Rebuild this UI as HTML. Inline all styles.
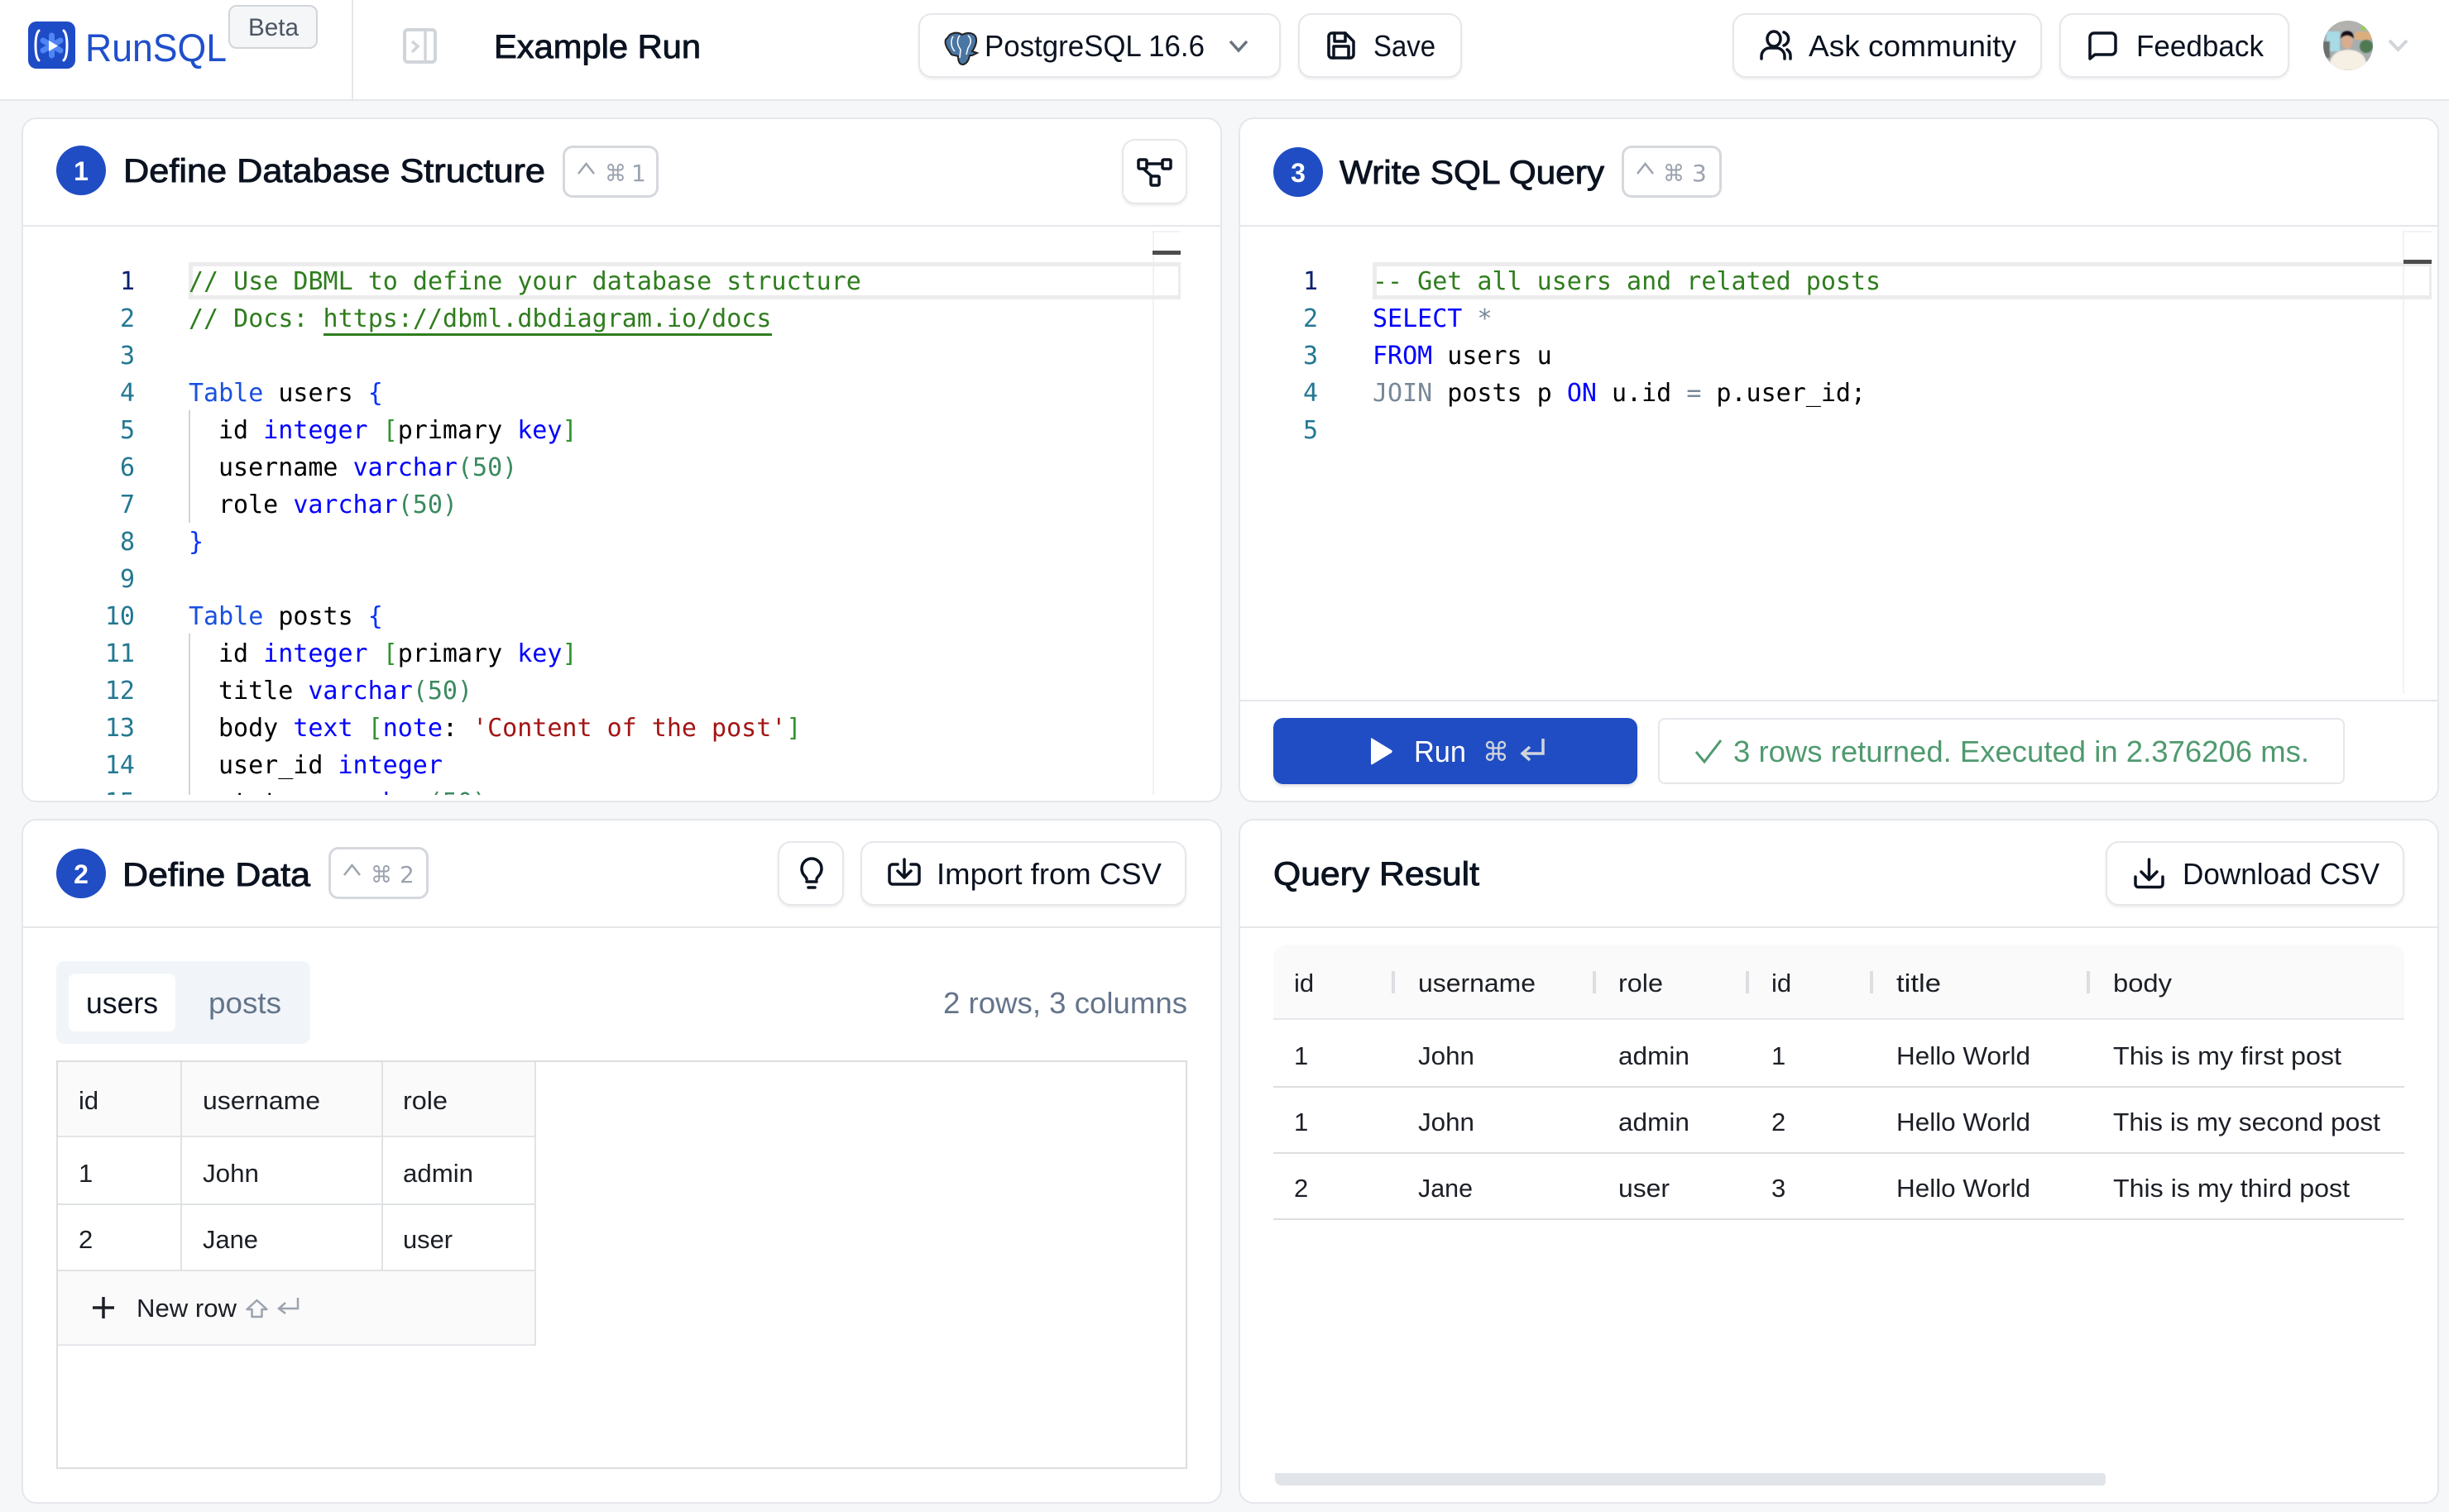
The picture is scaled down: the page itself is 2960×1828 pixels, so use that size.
<!DOCTYPE html>
<html lang="en">
<head>
<meta charset="utf-8">
<title>RunSQL - Example Run</title>
<style>
*{box-sizing:border-box}
html,body{margin:0;padding:0;width:2960px;height:1828px;overflow:hidden;background:#f6f7f9}
.a{position:absolute}
.header{left:0;top:0;width:2960px;height:122px;background:#fff;border-bottom:2px solid #e5e7eb}
.card{background:#fff;border:2px solid #e5e7eb;border-radius:18px;width:1451px;height:828px}
.btn{background:#fff;border:2px solid #e5e7eb;border-radius:16px;box-shadow:0 2px 3px rgba(0,0,0,.07)}
.kbd{background:#fff;border:3px solid #d5d8dd;border-radius:12px}
.line{background:#e5e7eb;height:2px}
svg{position:absolute;left:0;top:0}
text{font-family:"Liberation Sans",sans-serif;white-space:pre}
.h{font-weight:400;font-size:40px;fill:#0b1220;stroke:#0b1220;stroke-width:.9px}
.b{font-size:36px;fill:#0b1220}
.n{font-weight:700;font-size:32px;fill:#fff;text-anchor:middle}
.k{font-family:"DejaVu Sans",sans-serif;font-size:28px;fill:#9ca3af}
.t{font-size:31px;fill:#1c1f26}
.ic{fill:none;stroke:#0b1220;stroke-width:3.5;stroke-linecap:round;stroke-linejoin:round}
.code text,text.m{font-family:"DejaVu Sans Mono",monospace;font-size:30px}
.ln{fill:#237893;text-anchor:end}
.cm{fill:#2f7d1e}.kw{fill:#0000ff}.tb{fill:#1a50e0}.br{fill:#319331}.nm{fill:#3a8a5e}.st{fill:#a31515}.bk{fill:#000}.op{fill:#778899}
</style>
</head>
<body>
<div class="a header"></div>
<div class="a" style="left:425px;top:0;width:2px;height:120px;background:#e5e7eb"></div>
<div class="a" style="left:276px;top:6px;width:108px;height:53px;background:#f5f6f8;border:2px solid #d1d5db;border-radius:10px"></div>
<div class="a btn" style="left:1110px;top:16px;width:438px;height:78px"></div>
<div class="a btn" style="left:1569px;top:16px;width:198px;height:78px"></div>
<div class="a btn" style="left:2094px;top:16px;width:374px;height:78px"></div>
<div class="a btn" style="left:2489px;top:16px;width:278px;height:78px"></div>

<div class="a card" style="left:26px;top:142px"></div>
<div class="a card" style="left:26px;top:990px"></div>
<div class="a card" style="left:1497px;top:142px"></div>
<div class="a card" style="left:1497px;top:990px"></div>
<div class="a line" style="left:28px;top:272px;width:1447px"></div>
<div class="a line" style="left:1499px;top:272px;width:1447px"></div>
<div class="a line" style="left:28px;top:1120px;width:1447px"></div>
<div class="a line" style="left:1499px;top:1120px;width:1447px"></div>
<div class="a line" style="left:1499px;top:846px;width:1447px"></div>

<div class="a kbd" style="left:680px;top:176px;width:116px;height:63px"></div>
<div class="a kbd" style="left:1960px;top:176px;width:121px;height:63px"></div>
<div class="a kbd" style="left:397px;top:1024px;width:121px;height:63px"></div>
<div class="a btn" style="left:1356px;top:168px;width:79px;height:79px"></div>
<div class="a btn" style="left:940px;top:1017px;width:80px;height:78px"></div>
<div class="a btn" style="left:1040px;top:1017px;width:394px;height:78px"></div>
<div class="a btn" style="left:2545px;top:1017px;width:361px;height:78px"></div>

<div class="a" style="left:1539px;top:868px;width:440px;height:80px;background:#204dc4;border-radius:12px;box-shadow:0 2px 4px rgba(0,0,0,.15)"></div>
<div class="a" style="left:2004px;top:868px;width:830px;height:80px;background:#fff;border:2px solid #e5e7eb;border-radius:8px"></div>

<!-- editor chrome card 1 -->
<div class="a" style="left:1393px;top:279px;width:34px;height:682px;border-left:2px solid #f2f2f2;border-top:2px solid #f2f2f2"></div>
<div class="a" style="left:228px;top:317px;width:1199px;height:45px;border:5px solid #ececec;border-right-width:3px"></div>
<div class="a" style="left:1393px;top:303px;width:34px;height:5px;background:#4d4d4d"></div>
<div class="a" style="left:228px;top:496px;width:2px;height:136px;background:#d3d3d3"></div>
<div class="a" style="left:228px;top:766px;width:2px;height:195px;background:#d3d3d3"></div>
<!-- editor chrome card 3 -->
<div class="a" style="left:2904px;top:279px;width:35px;height:559px;border-left:2px solid #f2f2f2;border-top:2px solid #f2f2f2"></div>
<div class="a" style="left:1659px;top:317px;width:1280px;height:45px;border:5px solid #ececec;border-right-width:3px"></div>
<div class="a" style="left:2905px;top:314px;width:34px;height:5px;background:#4d4d4d"></div>

<!-- tabs -->
<div class="a" style="left:68px;top:1162px;width:307px;height:100px;background:#f1f5f9;border-radius:10px"></div>
<div class="a" style="left:83px;top:1177px;width:129px;height:70px;background:#fff;border-radius:8px"></div>

<!-- data grid -->
<div class="a" style="left:68px;top:1282px;width:1367px;height:494px;border:2px solid #dcdee1;background:#fff"></div>
<div class="a" style="left:70px;top:1284px;width:577px;height:89px;background:#fafafa"></div>
<div class="a" style="left:70px;top:1373px;width:577px;height:2px;background:#e3e5e8"></div>
<div class="a" style="left:70px;top:1455px;width:577px;height:2px;background:#e0e2e5"></div>
<div class="a" style="left:70px;top:1535px;width:577px;height:2px;background:#e0e2e5"></div>
<div class="a" style="left:70px;top:1537px;width:577px;height:89px;background:#fafafa"></div>
<div class="a" style="left:70px;top:1625px;width:577px;height:2px;background:#e5e7eb"></div>
<div class="a" style="left:218px;top:1284px;width:2px;height:252px;background:#e0e2e5"></div>
<div class="a" style="left:461px;top:1284px;width:2px;height:252px;background:#e0e2e5"></div>
<div class="a" style="left:646px;top:1284px;width:2px;height:343px;background:#e0e2e5"></div>

<!-- result table -->
<div class="a" style="left:1539px;top:1142px;width:1367px;height:89px;background:#fafafa;border-radius:16px 16px 0 0"></div>
<div class="a" style="left:1539px;top:1231px;width:1367px;height:2px;background:#e5e7eb"></div>
<div class="a" style="left:1539px;top:1313px;width:1367px;height:2px;background:#dcdee1"></div>
<div class="a" style="left:1539px;top:1393px;width:1367px;height:2px;background:#dcdee1"></div>
<div class="a" style="left:1539px;top:1473px;width:1367px;height:2px;background:#dcdee1"></div>
<div class="a" style="left:1682px;top:1174px;width:4px;height:27px;background:#dcdee1"></div>
<div class="a" style="left:1925px;top:1174px;width:4px;height:27px;background:#dcdee1"></div>
<div class="a" style="left:2110px;top:1174px;width:4px;height:27px;background:#dcdee1"></div>
<div class="a" style="left:2260px;top:1174px;width:4px;height:27px;background:#dcdee1"></div>
<div class="a" style="left:2522px;top:1174px;width:4px;height:27px;background:#dcdee1"></div>
<div class="a" style="left:1541px;top:1781px;width:1004px;height:15px;background:#e1e4e9;border-radius:0 4px 4px 8px"></div>

<svg width="2960" height="1828" viewBox="0 0 2960 1828" xmlns="http://www.w3.org/2000/svg">
<defs>
<clipPath id="c1"><rect x="28" y="276" width="1447" height="685"/></clipPath>
<clipPath id="av"><circle cx="2838" cy="55" r="30"/></clipPath>
<filter id="bl"><feGaussianBlur stdDeviation="0.8"/></filter>
</defs>

<!-- logo -->
<rect x="34" y="26" width="57" height="57" rx="10" fill="#1e4bc6"/>
<path d="M47 37c-3 3-4 10-4 18s1 15 4 18M77 37c3 3 4 10 4 18s-1 15-4 18" fill="none" stroke="#fff" stroke-width="3" stroke-linecap="round"/>
<path d="M62.500 43v24M52 49l21 12M73 49L52 61" stroke="#4f86f5" stroke-width="7" stroke-linecap="round"/>
<path d="M59 49l11 6.500-11 6.500z" fill="#fff"/>
<text x="103" y="74" font-size="47" fill="#1f4fcb" textLength="171" lengthAdjust="spacingAndGlyphs">RunSQL</text>
<text x="300" y="43" font-size="30" fill="#4b5563" textLength="61" lengthAdjust="spacingAndGlyphs">Beta</text>

<!-- sidebar toggle -->
<rect x="489" y="36" width="37" height="39" rx="4" fill="none" stroke="#d1d5db" stroke-width="4"/>
<path d="M514 36v39M498 50l7 6-7 7" fill="none" stroke="#d1d5db" stroke-width="3.500"/>
<text class="h" x="597" y="70" textLength="250" lengthAdjust="spacingAndGlyphs">Example Run</text>

<!-- postgres -->
<path d="M1148 42C1155 38 1160 40 1163 42C1168 39 1176 39 1179 44C1182 50 1178 58 1175 62L1181 64L1175 67L1172 67C1171 72 1169 77 1164 78C1159 78 1158 73 1158 68C1155 67 1152 67 1150 66C1146 60 1141 54 1143 48Z" fill="#4a76a4" stroke="#222" stroke-width="2"/>
<path d="M1152 44C1148 50 1150 58 1154 62M1160 43C1156 48 1157 55 1161 60L1160 70M1170 43C1176 48 1172 55 1170 58L1168 66" fill="none" stroke="#fff" stroke-width="1.500"/>
<text class="b" x="1190" y="68" textLength="266" lengthAdjust="spacingAndGlyphs">PostgreSQL 16.6</text>
<path d="M1487 50l10 11 10-11" fill="none" stroke="#6b7280" stroke-width="3.500"/>

<!-- save -->
<path class="ic" d="M1610 40h16l10 10v16a4 4 0 0 1-4 4h-22a4 4 0 0 1-4-4v-22a4 4 0 0 1 4-4z"/>
<path class="ic" d="M1613 40v10h13v-10M1612 70v-14h18v14"/>
<text class="b" x="1660" y="68" textLength="75" lengthAdjust="spacingAndGlyphs">Save</text>

<!-- ask community -->
<ellipse class="ic" cx="2144" cy="47" rx="8" ry="9"/>
<path class="ic" d="M2129 71v-3a10 10 0 0 1 10-10h8a10 10 0 0 1 10 10v3M2156 39a8.500 8.500 0 0 1 0 16M2160 60a9 9 0 0 1 4 8v3"/>
<text class="b" x="2186" y="68" textLength="251" lengthAdjust="spacingAndGlyphs">Ask community</text>

<!-- feedback -->
<path class="ic" d="M2531 40h21a5 5 0 0 1 5 5v16a5 5 0 0 1-5 5h-20l-6 5v-26a5 5 0 0 1 5-5z"/>
<text class="b" x="2582" y="68" textLength="154" lengthAdjust="spacingAndGlyphs">Feedback</text>

<!-- avatar -->
<g clip-path="url(#av)">
<rect x="2808" y="25" width="60" height="60" fill="#a7aeb0"/>
<g filter="url(#bl)">
<rect x="2808" y="25" width="60" height="12" fill="#b3b1ad"/>
<rect x="2812" y="38" width="16" height="24" fill="#a8dbe6"/>
<rect x="2846" y="38" width="20" height="10" fill="#dcae7e"/>
<circle cx="2860" cy="56" r="8" fill="#4d7a52"/>
<circle cx="2857" cy="34" r="3" fill="#8fd04c"/>
<rect x="2808" y="50" width="8" height="20" fill="#6b6f6a"/>
<path d="M2815 85c0-18 8-24 23-25 15 1 23 7 23 25z" fill="#f6efe3"/>
<ellipse cx="2837" cy="49" rx="7" ry="10" fill="#d8ad8f"/>
<path d="M2829 47c0-8 5-10 8-10s8 2 8 10c-3-3-6-4-8-4s-6 1-8 4z" fill="#121015"/>
</g>
</g>
<path d="M2888 49l10.500 11 10.500-11" fill="none" stroke="#d1d5db" stroke-width="4"/>

<!-- card 1 header -->
<circle cx="98" cy="206" r="30" fill="#204dc4"/>
<text class="n" x="98" y="218">1</text>
<text class="h" x="149" y="220" textLength="510" lengthAdjust="spacingAndGlyphs">Define Database Structure</text>
<path d="M699 210l9.500-12 9.500 12" fill="none" stroke="#9ca3af" stroke-width="2.500"/>
<text class="k" x="731" y="219" textLength="26" lengthAdjust="spacingAndGlyphs">⌘</text>
<text class="k" x="763" y="219">1</text>
<g class="ic" stroke-width="3">
<rect x="1376" y="193" width="10" height="11" rx="1.500"/><rect x="1405" y="193" width="10" height="11" rx="1.500"/><rect x="1391" y="213" width="10" height="11" rx="1.500"/>
<path d="M1386 198h19M1382 204l10 9"/>
</g>

<!-- card 1 code -->
<g class="code" clip-path="url(#c1)">
<g>
<text class="ln" x="163" y="350" style="fill:#0b216f">1</text><text class="ln" x="163" y="395">2</text><text class="ln" x="163" y="440">3</text><text class="ln" x="163" y="485">4</text><text class="ln" x="163" y="530">5</text><text class="ln" x="163" y="575">6</text><text class="ln" x="163" y="620">7</text><text class="ln" x="163" y="665">8</text><text class="ln" x="163" y="710">9</text><text class="ln" x="163" y="755">10</text><text class="ln" x="163" y="800">11</text><text class="ln" x="163" y="845">12</text><text class="ln" x="163" y="890">13</text><text class="ln" x="163" y="935">14</text><text class="ln" x="163" y="980">15</text>
</g>
<text x="228" y="350" class="cm">// Use DBML to define your database structure</text>
<text x="228" y="395" class="cm">// Docs: https://dbml.dbdiagram.io/docs</text>
<text x="228" y="485"><tspan class="tb">Table</tspan><tspan class="bk"> users </tspan><tspan fill="#0431fa">{</tspan></text>
<text x="264" y="530"><tspan class="bk">id </tspan><tspan class="kw">integer</tspan><tspan class="bk"> </tspan><tspan class="br">[</tspan><tspan class="bk">primary </tspan><tspan class="kw">key</tspan><tspan class="br">]</tspan></text>
<text x="264" y="575"><tspan class="bk">username </tspan><tspan class="kw">varchar</tspan><tspan class="nm">(50)</tspan></text>
<text x="264" y="620"><tspan class="bk">role </tspan><tspan class="kw">varchar</tspan><tspan class="nm">(50)</tspan></text>
<text x="228" y="665" fill="#0431fa">}</text>
<text x="228" y="755"><tspan class="tb">Table</tspan><tspan class="bk"> posts </tspan><tspan fill="#0431fa">{</tspan></text>
<text x="264" y="800"><tspan class="bk">id </tspan><tspan class="kw">integer</tspan><tspan class="bk"> </tspan><tspan class="br">[</tspan><tspan class="bk">primary </tspan><tspan class="kw">key</tspan><tspan class="br">]</tspan></text>
<text x="264" y="845"><tspan class="bk">title </tspan><tspan class="kw">varchar</tspan><tspan class="nm">(50)</tspan></text>
<text x="264" y="890"><tspan class="bk">body </tspan><tspan class="kw">text</tspan><tspan class="bk"> </tspan><tspan class="br">[</tspan><tspan class="kw">note</tspan><tspan class="bk">: </tspan><tspan class="st">'Content of the post'</tspan><tspan class="br">]</tspan></text>
<text x="264" y="935"><tspan class="bk">user_id </tspan><tspan class="kw">integer</tspan></text>
<text x="264" y="980"><tspan class="bk">status </tspan><tspan class="kw">varchar</tspan><tspan class="nm">(50)</tspan></text>
</g>
<rect x="391" y="403" width="542" height="3" fill="#2f7d1e"/>

<!-- card 3 header -->
<circle cx="1569" cy="208" r="30" fill="#204dc4"/>
<text class="n" x="1569" y="220">3</text>
<text class="h" x="1619" y="222" textLength="320" lengthAdjust="spacingAndGlyphs">Write SQL Query</text>
<path d="M1979 210l9.500-12 9.500 12" fill="none" stroke="#9ca3af" stroke-width="2.500"/>
<text class="k" x="2010" y="219" textLength="26" lengthAdjust="spacingAndGlyphs">⌘</text>
<text class="k" x="2045" y="219">3</text>

<!-- card 3 code -->
<g class="code">
<text class="ln" x="1593" y="350" style="fill:#0b216f">1</text><text class="ln" x="1593" y="395">2</text><text class="ln" x="1593" y="440">3</text><text class="ln" x="1593" y="485">4</text><text class="ln" x="1593" y="530">5</text>
<text x="1659" y="350" class="cm">-- Get all users and related posts</text>
<text x="1659" y="395"><tspan class="kw">SELECT</tspan><tspan class="bk"> </tspan><tspan class="op">*</tspan></text>
<text x="1659" y="440"><tspan class="kw">FROM</tspan><tspan class="bk"> users u</tspan></text>
<text x="1659" y="485"><tspan class="op">JOIN</tspan><tspan class="bk"> posts p </tspan><tspan class="kw">ON</tspan><tspan class="bk"> u.id </tspan><tspan class="op">=</tspan><tspan class="bk"> p.user_id;</tspan></text>
</g>

<!-- run -->
<path d="M1657 893c0-1 1-1 2 0l23 14c1 1 1 2 0 3l-23 14c-1 1-2 0-2-1z" fill="#fff"/>
<text x="1709" y="921" font-size="36" fill="#fff" textLength="63" lengthAdjust="spacingAndGlyphs">Run</text>
<text x="1792" y="920" style="font-family:'DejaVu Sans',sans-serif" font-size="32" fill="#d1d5db" textLength="32" lengthAdjust="spacingAndGlyphs">⌘</text>
<path d="M1865 893v18h-25M1849 903l-9 8 9 8" fill="none" stroke="#d1d5db" stroke-width="3.500"/>
<path d="M2050 909l10 12 20-26" fill="none" stroke="#4f9a6f" stroke-width="3"/>
<text x="2095" y="921" font-size="36" fill="#4f9a6f" textLength="696" lengthAdjust="spacingAndGlyphs">3 rows returned. Executed in 2.376206 ms.</text>

<!-- card 2 header -->
<circle cx="98" cy="1056" r="30" fill="#204dc4"/>
<text class="n" x="98" y="1068">2</text>
<text class="h" x="148" y="1071" textLength="227" lengthAdjust="spacingAndGlyphs">Define Data</text>
<path d="M416 1058l9.500-12 9.500 12" fill="none" stroke="#9ca3af" stroke-width="2.500"/>
<text class="k" x="448" y="1067" textLength="26" lengthAdjust="spacingAndGlyphs">⌘</text>
<text class="k" x="483" y="1067">2</text>
<path class="ic" d="M975 1063c0-3-6-5-6-13a12 12 0 0 1 24 0c0 8-6 10-6 13"/>
<path class="ic" d="M975 1066h12M977 1073h8"/>
<path class="ic" d="M1085 1045h-6a4 4 0 0 0-4 4v16a4 4 0 0 0 4 4h28a4 4 0 0 0 4-4v-16a4 4 0 0 0-4-4h-6"/>
<path class="ic" d="M1093 1039v21M1085 1053l8 8 8-8"/>
<text class="b" x="1132" y="1069" textLength="272" lengthAdjust="spacingAndGlyphs">Import from CSV</text>

<!-- tabs text -->
<text x="104" y="1225" font-size="36" fill="#0b1220" textLength="87" lengthAdjust="spacingAndGlyphs">users</text>
<text x="252" y="1225" font-size="36" fill="#64748b" textLength="88" lengthAdjust="spacingAndGlyphs">posts</text>
<text x="1140" y="1225" font-size="36" fill="#64748b" textLength="295" lengthAdjust="spacingAndGlyphs">2 rows, 3 columns</text>

<!-- grid text -->
<text class="t" x="95" y="1341">id</text>
<text class="t" x="245" y="1341" textLength="142" lengthAdjust="spacingAndGlyphs">username</text>
<text class="t" x="487" y="1341" textLength="54" lengthAdjust="spacingAndGlyphs">role</text>
<text class="t" x="95" y="1429">1</text>
<text class="t" x="245" y="1429" textLength="68" lengthAdjust="spacingAndGlyphs">John</text>
<text class="t" x="487" y="1429" textLength="85" lengthAdjust="spacingAndGlyphs">admin</text>
<text class="t" x="95" y="1509">2</text>
<text class="t" x="245" y="1509" textLength="67" lengthAdjust="spacingAndGlyphs">Jane</text>
<text class="t" x="487" y="1509" textLength="60" lengthAdjust="spacingAndGlyphs">user</text>
<path d="M125 1568v26M112 1581h26" stroke="#1c1f26" stroke-width="3.500" fill="none"/>
<text class="t" x="165" y="1592" textLength="121" lengthAdjust="spacingAndGlyphs">New row</text>
<path d="M310.500 1572l12 11h-6v9h-12v-9h-6z" fill="none" stroke="#9ca3af" stroke-width="2.500" stroke-linejoin="round"/>
<path d="M360 1569v13h-23M345 1575l-8 7 8 6" fill="none" stroke="#9ca3af" stroke-width="2.500"/>

<!-- card 4 -->
<text class="h" x="1539" y="1070" textLength="249" lengthAdjust="spacingAndGlyphs">Query Result</text>
<path class="ic" d="M2597.500 1039v24M2588 1054l9.500 9.500 9.500-9.500M2581 1060v9a3.500 3.500 0 0 0 3.500 3.500h26a3.500 3.500 0 0 0 3.500-3.500v-9"/>
<text class="b" x="2638" y="1069" textLength="238" lengthAdjust="spacingAndGlyphs">Download CSV</text>

<text class="t" x="1564" y="1199">id</text>
<text class="t" x="1714" y="1199" textLength="142" lengthAdjust="spacingAndGlyphs">username</text>
<text class="t" x="1956" y="1199" textLength="54" lengthAdjust="spacingAndGlyphs">role</text>
<text class="t" x="2141" y="1199">id</text>
<text class="t" x="2292" y="1199" textLength="54" lengthAdjust="spacingAndGlyphs">title</text>
<text class="t" x="2554" y="1199" textLength="71" lengthAdjust="spacingAndGlyphs">body</text>

<text class="t" x="1564" y="1287">1</text>
<text class="t" x="1714" y="1287" textLength="68" lengthAdjust="spacingAndGlyphs">John</text>
<text class="t" x="1956" y="1287" textLength="86" lengthAdjust="spacingAndGlyphs">admin</text>
<text class="t" x="2141" y="1287">1</text>
<text class="t" x="2292" y="1287" textLength="162" lengthAdjust="spacingAndGlyphs">Hello World</text>
<text class="t" x="2554" y="1287" textLength="276" lengthAdjust="spacingAndGlyphs">This is my first post</text>

<text class="t" x="1564" y="1367">1</text>
<text class="t" x="1714" y="1367" textLength="68" lengthAdjust="spacingAndGlyphs">John</text>
<text class="t" x="1956" y="1367" textLength="86" lengthAdjust="spacingAndGlyphs">admin</text>
<text class="t" x="2141" y="1367">2</text>
<text class="t" x="2292" y="1367" textLength="162" lengthAdjust="spacingAndGlyphs">Hello World</text>
<text class="t" x="2554" y="1367" textLength="323" lengthAdjust="spacingAndGlyphs">This is my second post</text>

<text class="t" x="1564" y="1447">2</text>
<text class="t" x="1714" y="1447" textLength="66" lengthAdjust="spacingAndGlyphs">Jane</text>
<text class="t" x="1956" y="1447" textLength="62" lengthAdjust="spacingAndGlyphs">user</text>
<text class="t" x="2141" y="1447">3</text>
<text class="t" x="2292" y="1447" textLength="162" lengthAdjust="spacingAndGlyphs">Hello World</text>
<text class="t" x="2554" y="1447" textLength="286" lengthAdjust="spacingAndGlyphs">This is my third post</text>
</svg>
</body>
</html>
